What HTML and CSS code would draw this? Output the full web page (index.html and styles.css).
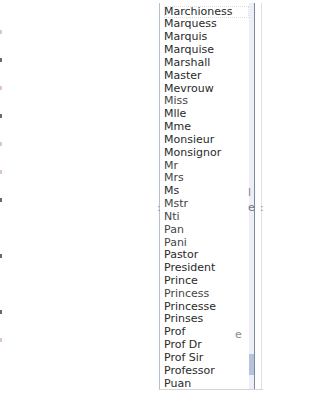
FILE: index.html
```html
<!DOCTYPE html>
<html lang="en">
<head>
    <meta charset="UTF-8">
    <meta name="viewport" content="width=device-width, initial-scale=1.0">
    <title>Title list</title>
    <link rel="stylesheet" href="styles.css">
</head>
<body>
    <div class="page">
        <div class="edge">
            <span class="mark"></span>
            <span class="mark dark"></span>
            <span class="mark"></span>
            <span class="mark dark"></span>
            <span class="mark"></span>
            <span class="mark"></span>
            <span class="mark dark"></span>
            <span class="mark blank"></span>
            <span class="mark dark"></span>
            <span class="mark blank"></span>
            <span class="mark dark"></span>
            <span class="mark"></span>
        </div>

        <div class="listbox">
            <ul class="options">
                <li class="selected">Marchioness</li>
                <li>Marquess</li>
                <li>Marquis</li>
                <li>Marquise</li>
                <li>Marshall</li>
                <li>Master</li>
                <li>Mevrouw</li>
                <li class="faded">Miss</li>
                <li>Mlle</li>
                <li>Mme</li>
                <li>Monsieur</li>
                <li>Monsignor</li>
                <li class="faded">Mr</li>
                <li class="faded">Mrs</li>
                <li>Ms</li>
                <li class="faded">Mstr</li>
                <li class="faded">Nti</li>
                <li class="faded">Pan</li>
                <li class="faded">Pani</li>
                <li>Pastor</li>
                <li>President</li>
                <li>Prince</li>
                <li class="faded">Princess</li>
                <li>Princesse</li>
                <li>Prinses</li>
                <li>Prof</li>
                <li>Prof Dr</li>
                <li>Prof Sir</li>
                <li>Professor</li>
                <li>Puan</li>
            </ul>
            <div class="scrollbar">
                <div class="thumb"></div>
            </div>

            <!-- bits of the page underneath that show through -->
            <span class="ghost ghost-bar">l</span>
            <span class="ghost ghost-e">e</span>
            <span class="ghost ghost-colon">:</span>
            <span class="ghost ghost-left">:</span>
            <span class="ghost ghost-prof">e</span>
        </div>
    </div>
</body>
</html>
```

FILE: styles.css
```css
* {
    margin: 0;
    padding: 0;
    box-sizing: border-box;
}

body {
    background: #fff;
    font-family: "DejaVu Sans", Verdana, sans-serif;
    width: 326px;
    height: 400px;
    overflow: hidden;
}

.page {
    display: flex;
    align-items: flex-start;
}

.edge {
    width: 159px;
    display: flex;
    flex-direction: column;
    gap: 24px;
    padding-top: 30px;
}

.mark {
    display: block;
    width: 4px;
    height: 4px;
    border-left: 2px dotted #e2c6c6;
}

.mark.dark {
    border-left-color: #6a6a6a;
}

.mark.blank {
    border-left-color: transparent;
}

.listbox {
    position: relative;
    display: flex;
    margin-top: 3px;
    height: 387px;
    border-left: 1px solid #b4c1d0;
    border-bottom: 1px solid #d4d4d4;
}

.options {
    list-style: none;
    width: 89px;
    padding: 2.6px 0 0 4px;
    overflow: hidden;
}

.options li {
    font-size: 11px;
    line-height: 12.83px;
    height: 12.83px;
    color: #2a2a2a;
    white-space: nowrap;
}

.options li.faded {
    color: #444;
}

.options li.selected {
    outline: 1px dotted #dcdcdc;
    outline-offset: -1px;
}

.scrollbar {
    width: 14px;
    display: flex;
    flex-direction: column;
    justify-content: flex-end;
    padding-bottom: 14px;
    background: linear-gradient(to right,
        #eceef8 0, #eceef8 5px,
        #7c8a96 5px, #7c8a96 6px,
        #fff 6px, #fff 12px,
        #e6e0e4 12px, #e6e0e4 13px,
        #fff 13px);
}

.thumb {
    width: 5px;
    height: 21px;
    background: #b6c2e0;
}

.ghost {
    position: absolute;
    font-size: 11px;
    line-height: 12px;
    color: #8a8a8a;
}

.ghost-bar {
    left: 88px;
    top: 184px;
}

.ghost-e {
    left: 88px;
    top: 199px;
    color: #777;
}

.ghost-colon {
    left: 100px;
    top: 199px;
}

.ghost-left {
    left: -3px;
    top: 199px;
}

.ghost-prof {
    left: 75px;
    top: 326px;
}
```
